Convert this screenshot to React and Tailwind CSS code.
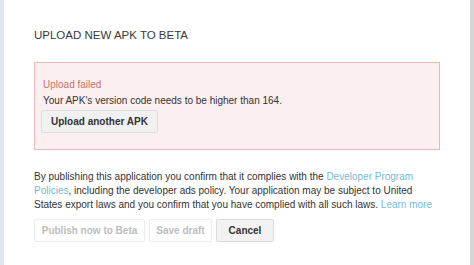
export default function App() {
  const font = { fontFamily: '"Liberation Sans", Arial, sans-serif' };
  return (
    <div className="flex w-[474px] h-[265px] bg-white overflow-hidden" style={font}>
      <div className="w-[4px] shrink-0 bg-[#dde7f2]" />
      <div className="flex-1 flex flex-col pl-[30px] pt-[27px]">
        <h1 className="text-[11.5px] leading-[16px] text-[#3a3a3a] font-normal">
          UPLOAD NEW APK TO BETA
        </h1>
        <div className="mt-[19px] w-[406px] h-[88px] border border-[#e8b9b9] bg-[#fcefef] pt-[14px] pl-[8px] text-[10px] leading-[16px]">
          <div className="text-[#c8716e]">Upload failed</div>
          <div className="text-[#333]">Your APK's version code needs to be higher than 164.</div>
          <button className="mt-[1px] -ml-[2px] h-[23px] px-[9px] bg-[#f1f1f1] border border-[#dddddd] rounded-[2px] font-bold text-[10px] text-[#333]">
            Upload another APK
          </button>
        </div>
        <p className="mt-[20px] w-[406px] text-[10px] leading-[14px] text-[#333]">
          By publishing this application you confirm that it complies with the{' '}
          <span className="text-[#74bcd3]">Developer Program</span>{' '}
          <span className="text-[#74bcd3]">Policies</span>, including the developer ads policy. Your application may be subject to United States export laws and you confirm that you have complied with all such laws.{' '}
          <span className="text-[#74bcd3]">Learn more</span>
        </p>
        <div className="mt-[7px] flex gap-[4px]">
          <button className="w-[111px] h-[23px] bg-white border border-[#ececec] rounded-[2px] font-bold text-[10px] text-[#bdbdbd]">
            Publish now to Beta
          </button>
          <button className="w-[63px] h-[23px] bg-white border border-[#ececec] rounded-[2px] font-bold text-[10px] text-[#bdbdbd]">
            Save draft
          </button>
          <button className="w-[58px] h-[23px] bg-[#f2f2f2] border border-[#dcdcdc] rounded-[2px] font-bold text-[10px] text-[#333]">
            Cancel
          </button>
        </div>
      </div>
      <div className="w-[4px] shrink-0 bg-[#d6d6d6]" />
    </div>
  );
}
